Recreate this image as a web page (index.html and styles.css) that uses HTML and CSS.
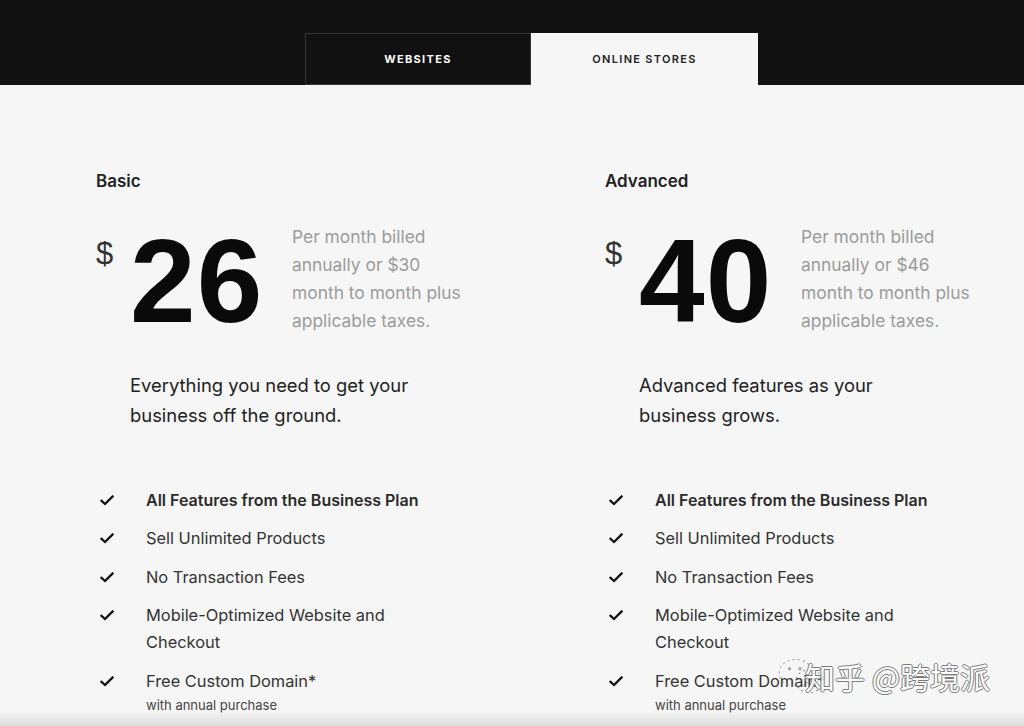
FILE: index.html
```html
<!DOCTYPE html>
<html lang="en">
<head>
<meta charset="utf-8">
<title>Pricing</title>
<link rel="stylesheet" href="styles.css">
</head>
<body>
<header class="topbar">
  <nav class="tabs">
    <div class="tab tab-dark">WEBSITES</div>
    <div class="tab tab-active">ONLINE STORES</div>
  </nav>
</header>
<main class="plans">
  <section class="plan">
    <h2 class="plan-name">Basic</h2>
    <div class="price-row">
      <span class="currency">$</span>
      <span class="amount">26</span>
      <p class="billing">Per month billed<br>annually or $30<br>month to month plus<br>applicable taxes.</p>
    </div>
    <p class="tagline">Everything you need to get your<br>business off the ground.</p>
    <ul class="features">
      <li class="feature strong"><svg class="check" viewBox="0 0 14 11"><path d="M1.5 5.8 L5 9 L12.5 1.5"/></svg><span>All Features from the Business Plan</span></li>
      <li class="feature"><svg class="check" viewBox="0 0 14 11"><path d="M1.5 5.8 L5 9 L12.5 1.5"/></svg><span>Sell Unlimited Products</span></li>
      <li class="feature"><svg class="check" viewBox="0 0 14 11"><path d="M1.5 5.8 L5 9 L12.5 1.5"/></svg><span>No Transaction Fees</span></li>
      <li class="feature"><svg class="check" viewBox="0 0 14 11"><path d="M1.5 5.8 L5 9 L12.5 1.5"/></svg><span>Mobile-Optimized Website and<br>Checkout</span></li>
      <li class="feature"><svg class="check" viewBox="0 0 14 11"><path d="M1.5 5.8 L5 9 L12.5 1.5"/></svg><span>Free Custom Domain*<small class="note">with annual purchase</small></span></li>
    </ul>
  </section>
  <section class="plan">
    <h2 class="plan-name">Advanced</h2>
    <div class="price-row">
      <span class="currency">$</span>
      <span class="amount">40</span>
      <p class="billing">Per month billed<br>annually or $46<br>month to month plus<br>applicable taxes.</p>
    </div>
    <p class="tagline">Advanced features as your<br>business grows.</p>
    <ul class="features">
      <li class="feature strong"><svg class="check" viewBox="0 0 14 11"><path d="M1.5 5.8 L5 9 L12.5 1.5"/></svg><span>All Features from the Business Plan</span></li>
      <li class="feature"><svg class="check" viewBox="0 0 14 11"><path d="M1.5 5.8 L5 9 L12.5 1.5"/></svg><span>Sell Unlimited Products</span></li>
      <li class="feature"><svg class="check" viewBox="0 0 14 11"><path d="M1.5 5.8 L5 9 L12.5 1.5"/></svg><span>No Transaction Fees</span></li>
      <li class="feature"><svg class="check" viewBox="0 0 14 11"><path d="M1.5 5.8 L5 9 L12.5 1.5"/></svg><span>Mobile-Optimized Website and<br>Checkout</span></li>
      <li class="feature"><svg class="check" viewBox="0 0 14 11"><path d="M1.5 5.8 L5 9 L12.5 1.5"/></svg><span>Free Custom Domain*<small class="note">with annual purchase</small></span></li>
    </ul>
  </section>
</main>
<div class="watermark">
  <svg class="wm-icon" viewBox="0 0 52 40"><ellipse cx="20" cy="17" rx="16" ry="13"/><ellipse cx="33" cy="25" rx="13" ry="11"/><circle cx="14" cy="13" r="1.6"/><circle cx="24" cy="13" r="1.6"/><circle cx="29" cy="23" r="1.3"/><circle cx="37" cy="23" r="1.3"/></svg>
  <span class="wm-text">知乎 @跨境派</span>
</div>
<div class="bottom-shade"></div>
</body>
</html>
```
FILE: styles.css
```css
* { box-sizing: border-box; }
html, body { margin: 0; padding: 0; }
body {
  width: 1024px;
  height: 726px;
  overflow: hidden;
  position: relative;
  background: #f6f6f6;
  font-family: "Inter", "Liberation Sans", Arial, sans-serif;
  color: #333;
}
.topbar {
  height: 85px;
  background: #121212;
  display: flex;
  align-items: flex-end;
  padding-left: 305px;
}
.tabs { display: flex; }
.tab {
  width: 226px;
  height: 52px;
  display: flex;
  align-items: center;
  justify-content: center;
  font-size: 11px;
  font-weight: 700;
  letter-spacing: 1.3px;
}
.tab-dark {
  color: #fff;
  border: 1px solid #353535;
  background: #111;
}
.tab-active {
  width: 227px;
  background: #f6f6f6;
  color: #222;
  font-weight: 600;
}
.plans {
  display: grid;
  grid-template-columns: 509px 1fr;
  padding: 85px 0 0 96px;
}
.plan { min-width: 0; }
.plan-name {
  margin: 0;
  font-size: 17px;
  line-height: 22px;
  font-weight: 600;
  color: #222;
}
.price-row {
  display: flex;
  align-items: flex-start;
  margin-top: 30px;
}
.currency {
  font-family: "Liberation Sans", Arial, sans-serif;
  font-size: 31px;
  line-height: 36px;
  margin-top: 14px;
  color: #333;
  width: 34px;
}
.amount {
  font-family: "Liberation Sans", Arial, sans-serif;
  font-size: 118px;
  line-height: 118px;
  font-weight: 700;
  color: #0a0a0a;
  letter-spacing: 1px;
  width: 162px;
}
.billing {
  margin: 1px 0 0 0;
  font-size: 17.4px;
  line-height: 28px;
  color: #9b9b9b;
}
.tagline {
  margin: 30px 0 0 34px;
  font-size: 18.4px;
  line-height: 30px;
  color: #222;
}
.features {
  list-style: none;
  margin: 57px 0 0 0;
  padding: 0;
}
.feature {
  display: flex;
  align-items: flex-start;
  font-size: 16.4px;
  line-height: 27px;
  color: #333;
  margin-bottom: 11.4px;
}
.feature.strong { font-weight: 600; color: #2a2a2a; font-size: 16px; }
.check {
  width: 14px;
  height: 11px;
  margin: 8px 32px 0 4px;
  flex: none;
  fill: none;
  stroke: #111;
  stroke-width: 2.3;
  stroke-linecap: square;
}
.note {
  display: block;
  font-size: 13px;
  line-height: 20px;
  color: #444;
  margin-top: 0;
}
.watermark {
  position: absolute;
  left: 775px;
  top: 655px;
  display: flex;
  align-items: center;
  opacity: 0.85;
}
.wm-icon {
  width: 54px;
  height: 42px;
  fill: none;
  stroke: #888;
  stroke-width: 1;
  stroke-dasharray: 2 3;
}
.wm-icon circle { fill: #999; stroke: none; }
.wm-text {
  font-family: "Noto Sans CJK SC", sans-serif;
  font-size: 30px;
  line-height: 40px;
  color: #fff;
  margin-left: -24px;
  text-shadow: -1px 0 #666, 1px 0 #666, 0 -1px #666, 0 1px #666;
}
.bottom-shade {
  position: absolute;
  left: 0;
  right: 0;
  bottom: 0;
  height: 16px;
  background: linear-gradient(to bottom, rgba(0,0,0,0), rgba(0,0,0,0.1));
}
```
